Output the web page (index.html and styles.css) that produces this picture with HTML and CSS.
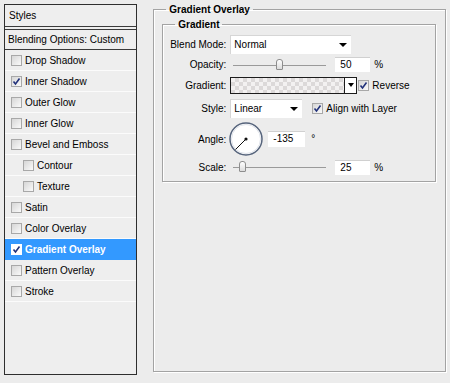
FILE: index.html
```html
<html>
	<head>
		<meta charset="utf-8" />
		<title>Layer Style</title>
		<link rel="stylesheet" href="styles.css">
	</head>
	<body>
		<div class="styles-panel">
			<div class="panel-head">Styles</div>
			<div class="panel-blend">Blending Options: Custom</div>
			<ul class="fx-list">
				<li><span class="cb"></span>Drop Shadow</li>
				<li><span class="cb checked"><svg viewBox="0 0 9 9"><path d="M1.5 4.5 L3.5 7 L7.5 1.5" /></svg></span>Inner Shadow</li>
				<li><span class="cb"></span>Outer Glow</li>
				<li><span class="cb"></span>Inner Glow</li>
				<li><span class="cb"></span>Bevel and Emboss</li>
				<li class="sub"><span class="cb"></span>Contour</li>
				<li class="sub"><span class="cb"></span>Texture</li>
				<li><span class="cb"></span>Satin</li>
				<li><span class="cb"></span>Color Overlay</li>
				<li class="active"><span class="cb checked"><svg viewBox="0 0 9 9"><path d="M1.5 4.5 L3.5 7 L7.5 1.5" /></svg></span>Gradient Overlay</li>
				<li><span class="cb"></span>Pattern Overlay</li>
				<li><span class="cb"></span>Stroke</li>
			</ul>
		</div>

		<fieldset class="group outer">
			<legend>Gradient Overlay</legend>
			<fieldset class="group inner">
				<legend>Gradient</legend>
				<div class="form">
					<label class="lbl">Blend Mode:</label>
					<div class="ctl">
						<div class="select wide">Normal<span class="arrow"></span></div>
					</div>

					<label class="lbl">Opacity:</label>
					<div class="ctl">
						<div class="slider"><span class="thumb" style="left: 43px"></span></div>
						<div class="num">50</div><span class="unit">%</span>
					</div>

					<label class="lbl">Gradient:</label>
					<div class="ctl">
						<div class="gradient"><div class="swatch"></div><div class="drop"><span class="arrow"></span></div></div>
						<span class="cb checked"><svg viewBox="0 0 9 9"><path d="M1.5 4.5 L3.5 7 L7.5 1.5" /></svg></span><span class="cb-text">Reverse</span>
					</div>

					<label class="lbl">Style:</label>
					<div class="ctl">
						<div class="select narrow">Linear<span class="arrow"></span></div>
						<span class="cb checked align"><svg viewBox="0 0 9 9"><path d="M1.5 4.5 L3.5 7 L7.5 1.5" /></svg></span><span class="cb-text">Align with Layer</span>
					</div>

					<label class="lbl">Angle:</label>
					<div class="ctl">
						<svg class="dial" width="36" height="36" viewBox="0 0 36 36">
							<circle cx="18" cy="18" r="16" fill="#fff" stroke="#56647c" stroke-width="1.5" />
							<circle cx="18" cy="18" r="14.5" fill="none" stroke="#dfe3ea" stroke-width="1" />
							<line x1="18" y1="18" x2="7.5" y2="28.5" stroke="#111" stroke-width="1" />
							<circle cx="18" cy="18" r="1.6" fill="#111" />
						</svg>
						<div class="num angle">-135</div><span class="deg">°</span>
					</div>

					<label class="lbl">Scale:</label>
					<div class="ctl">
						<div class="slider"><span class="thumb" style="left: 6px"></span></div>
						<div class="num">25</div><span class="unit">%</span>
					</div>
				</div>
			</fieldset>
		</fieldset>
	</body>
</html>
```

FILE: styles.css
```css
body {
	margin: 0;
	padding: 4px;
	background: #ececec;
	display: flex;
	align-items: flex-start;
	font-family: "Liberation Sans", Arial, sans-serif;
	font-size: 10px;
	color: #000;
}

/* left list of effects */

.styles-panel {
	box-sizing: border-box;
	width: 134px;
	height: 371px;
	border: 1px solid #2e2e2e;
	background: #eeeeee;
}

.panel-head {
	height: 21px;
	line-height: 21px;
	padding-left: 4px;
	border-bottom: 1px solid #3a3a3a;
	margin-bottom: 2px;
}

.panel-blend {
	height: 19px;
	line-height: 19px;
	padding-left: 3px;
	border-top: 1px solid #3a3a3a;
	border-bottom: 1px solid #3a3a3a;
}

.fx-list {
	list-style: none;
	margin: 0;
	padding: 0;
}

.fx-list li {
	height: 20px;
	display: flex;
	align-items: center;
	padding-left: 6px;
	border-bottom: 1px solid #fbfbfb;
}

.fx-list li.sub {
	padding-left: 18px;
}

.fx-list li.active {
	background: #3399ff;
	color: #fff;
	font-weight: bold;
	border-bottom-color: #3399ff;
}

.cb {
	box-sizing: border-box;
	width: 11px;
	height: 11px;
	border: 1px solid #a8a8a8;
	background: linear-gradient(135deg, #d6d6d6, #fafafa);
	margin-right: 3px;
	display: inline-flex;
	flex: none;
}

.cb svg {
	width: 9px;
	height: 9px;
}

.cb svg path {
	fill: none;
	stroke: #21317a;
	stroke-width: 1.6;
}

.active .cb {
	background: #fff;
	border-color: #fff;
}

/* right group boxes */

.group {
	margin: 0;
	border: 1px solid #a3a3a3;
	box-shadow: 1px 1px 0 #fff, inset 1px 1px 0 #fff;
}

.group legend {
	font-weight: bold;
	padding: 0 3px;
}

.outer {
	margin-left: 16px;
	width: 294px;
	height: 368px;
	box-sizing: border-box;
	padding: 4px 9px 0 8px;
}

.outer > legend {
	margin-left: 4px;
}

.inner {
	box-sizing: border-box;
	height: 163px;
	padding: 4px 0 0 0;
}

.inner > legend {
	margin-left: 12px;
}

.form {
	display: grid;
	grid-template-columns: 63px 1fr;
	grid-template-rows: 20px 21px 20px 26px 36px 20px;
	column-gap: 4px;
	align-items: center;
}

.lbl {
	text-align: right;
}

.ctl {
	display: flex;
	align-items: center;
}

.select {
	box-sizing: border-box;
	height: 19px;
	background: #fff;
	border-top: 1px solid #d6d6d6;
	border-left: 1px solid #d6d6d6;
	padding-left: 3px;
	display: flex;
	align-items: center;
	justify-content: space-between;
}

.select.wide {
	width: 121px;
}

.select.narrow {
	width: 72px;
}

.arrow {
	width: 0;
	height: 0;
	border-left: 4px solid transparent;
	border-right: 4px solid transparent;
	border-top: 4px solid #000;
	margin-right: 4px;
}

.slider {
	position: relative;
	width: 93px;
	height: 14px;
	margin-left: 3px;
	background: linear-gradient(#9a9a9a, #9a9a9a) 0 7px / 100% 1px no-repeat;
}

.thumb {
	position: absolute;
	top: 1px;
	width: 7px;
	height: 11px;
	box-sizing: border-box;
	border: 1px solid #8d8d8d;
	border-radius: 3px 3px 1px 1px;
	background: linear-gradient(#ffffff, #dcdcdc);
}

.num {
	box-sizing: border-box;
	width: 35px;
	height: 15px;
	line-height: 14px;
	background: #fff;
	border-top: 1px solid #d0d0d0;
	padding-left: 5px;
	margin-left: 9px;
}

.unit {
	margin-left: 4px;
}

.gradient {
	display: flex;
	height: 17px;
}

.swatch {
	box-sizing: border-box;
	width: 115px;
	height: 17px;
	border: 1px solid #1c1c1c;
	background-color: #f3f1f1;
	background-image:
		linear-gradient(45deg, #dcd9d9 25%, transparent 25%, transparent 75%, #dcd9d9 75%),
		linear-gradient(45deg, #dcd9d9 25%, transparent 25%, transparent 75%, #dcd9d9 75%);
	background-size: 8px 8px;
	background-position: 0 0, 4px 4px;
}

.drop {
	box-sizing: border-box;
	width: 12px;
	height: 17px;
	border: 1px solid #1c1c1c;
	border-left: none;
	background: #fff;
	display: flex;
	align-items: center;
	justify-content: center;
}

.drop .arrow {
	margin: 0;
	border-width: 4px 3px 0 3px;
}

.ctl .cb {
	margin-left: 1px;
}

.ctl .cb.align {
	margin-left: 10px;
}

.dial {
	margin-left: -2px;
}

.num.angle {
	width: 37px;
	height: 16px;
	margin-left: 4px;
}

.deg {
	margin-left: 6px;
	margin-top: -2px;
}
```
